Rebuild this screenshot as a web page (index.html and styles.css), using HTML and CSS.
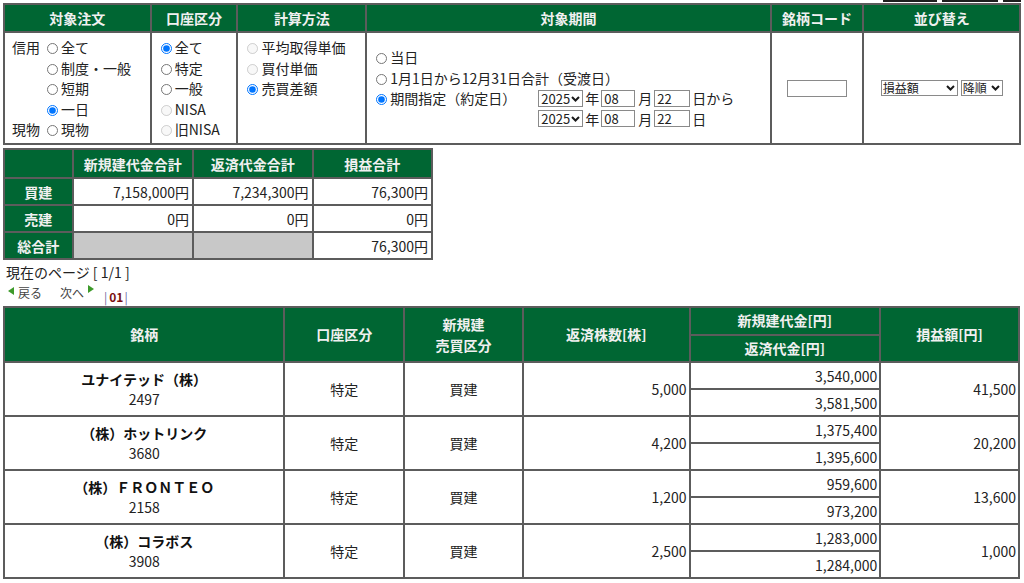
FILE: index.html
```html
<!DOCTYPE html>
<html lang="ja">
<head>
<meta charset="utf-8">
<title>損益</title>
<link rel="stylesheet" href="styles.css">
</head>
<body>
<div class="topbar"><span class="tb tb1"></span><span class="tb tb2"></span><span class="tb tb3"></span></div>

<table class="filter">
  <colgroup>
    <col class="fc1"><col class="fc2"><col class="fc3"><col class="fc4"><col class="fc5"><col class="fc6">
  </colgroup>
  <tr>
    <th>対象注文</th><th>口座区分</th><th>計算方法</th><th>対象期間</th><th>銘柄コード</th><th>並び替え</th>
  </tr>
  <tr>
    <td class="f-top f-order">
      <div class="order-grid">
        <span class="lbl">信用</span><label><input type="radio" name="ord">全て</label>
        <span></span><label><input type="radio" name="ord">制度・一般</label>
        <span></span><label><input type="radio" name="ord">短期</label>
        <span></span><label><input type="radio" name="ord" checked>一日</label>
        <span class="lbl">現物</span><label><input type="radio" name="ord">現物</label>
      </div>
    </td>
    <td class="f-top f-acc">
      <div class="stack">
        <label><input type="radio" name="acc" checked>全て</label>
        <label><input type="radio" name="acc">特定</label>
        <label><input type="radio" name="acc">一般</label>
        <label><input type="radio" name="acc" disabled>NISA</label>
        <label><input type="radio" name="acc" disabled>旧NISA</label>
      </div>
    </td>
    <td class="f-top f-calc">
      <div class="stack">
        <label><input type="radio" name="calc" disabled>平均取得単価</label>
        <label><input type="radio" name="calc" disabled>買付単価</label>
        <label><input type="radio" name="calc" checked>売買差額</label>
      </div>
    </td>
    <td class="f-period">
      <div class="period-grid">
        <label class="span2"><input type="radio" name="per">当日</label>
        <label class="span2"><input type="radio" name="per">1月1日から12月31日合計（受渡日）</label>
        <label><input type="radio" name="per" checked>期間指定（約定日）</label>
        <div class="date-row">
          <span class="sel sel-yr"><select><option>2025</option></select><svg class="chev" width="9" height="6" viewBox="0 0 9 6"><path d="M1 1l3.5 3.5L8 1" fill="none" stroke="#1a1a1a" stroke-width="2"/></svg></span><span>年</span><input class="md md1" type="text" value="08"><span>月</span><input class="md md2" type="text" value="22"><span>日から</span>
        </div>
        <span></span>
        <div class="date-row">
          <span class="sel sel-yr"><select><option>2025</option></select><svg class="chev" width="9" height="6" viewBox="0 0 9 6"><path d="M1 1l3.5 3.5L8 1" fill="none" stroke="#1a1a1a" stroke-width="2"/></svg></span><span>年</span><input class="md md1" type="text" value="08"><span>月</span><input class="md md2" type="text" value="22"><span>日</span>
        </div>
      </div>
    </td>
    <td class="f-center"><input class="code" type="text"></td>
    <td class="f-center">
      <div class="sort-row">
        <span class="sel sel-key"><select><option>損益額</option></select><svg class="chev" width="9" height="6" viewBox="0 0 9 6"><path d="M1 1l3.5 3.5L8 1" fill="none" stroke="#1a1a1a" stroke-width="2"/></svg></span>
        <span class="sel sel-dir"><select><option>降順</option></select><svg class="chev" width="9" height="6" viewBox="0 0 9 6"><path d="M1 1l3.5 3.5L8 1" fill="none" stroke="#1a1a1a" stroke-width="2"/></svg></span>
      </div>
    </td>
  </tr>
</table>

<table class="summary">
  <colgroup><col class="sc1"><col class="sc2"><col class="sc3"><col class="sc4"></colgroup>
  <tr class="shead"><th></th><th>新規建代金合計</th><th>返済代金合計</th><th>損益合計</th></tr>
  <tr><th>買建</th><td>7,158,000円</td><td>7,234,300円</td><td>76,300円</td></tr>
  <tr><th>売建</th><td>0円</td><td>0円</td><td>0円</td></tr>
  <tr><th>総合計</th><td class="gray"></td><td class="gray"></td><td>76,300円</td></tr>
</table>

<div class="pager">
  <div class="pageinfo">現在のページ [ 1/1 ]</div>
  <div class="nav">
    <span class="prev"><span class="tri-l"></span>戻る</span>
    <span class="next">次へ<span class="tri-r"></span></span>
    <span class="pages"><span class="bar">|</span><b>01</b><span class="bar">|</span></span>
  </div>
</div>

<table class="list">
  <colgroup><col class="lc1"><col class="lc2"><col class="lc3"><col class="lc4"><col class="lc5"><col class="lc6"></colgroup>
  <tr class="hrow">
    <th rowspan="2">銘柄</th>
    <th rowspan="2">口座区分</th>
    <th rowspan="2">新規建<br>売買区分</th>
    <th rowspan="2">返済株数[株]</th>
    <th class="hsub">新規建代金[円]</th>
    <th rowspan="2">損益額[円]</th>
  </tr>
  <tr class="hrow"><th class="hsub">返済代金[円]</th></tr>

  <tr>
    <td rowspan="2" class="name"><b>ユナイテッド（株）</b><br>2497</td>
    <td rowspan="2" class="c">特定</td>
    <td rowspan="2" class="c">買建</td>
    <td rowspan="2" class="r">5,000</td>
    <td class="r sub">3,540,000</td>
    <td rowspan="2" class="r">41,500</td>
  </tr>
  <tr><td class="r sub">3,581,500</td></tr>

  <tr>
    <td rowspan="2" class="name"><b>（株）ホットリンク</b><br>3680</td>
    <td rowspan="2" class="c">特定</td>
    <td rowspan="2" class="c">買建</td>
    <td rowspan="2" class="r">4,200</td>
    <td class="r sub">1,375,400</td>
    <td rowspan="2" class="r">20,200</td>
  </tr>
  <tr><td class="r sub">1,395,600</td></tr>

  <tr>
    <td rowspan="2" class="name"><b>（株）ＦＲＯＮＴＥＯ</b><br>2158</td>
    <td rowspan="2" class="c">特定</td>
    <td rowspan="2" class="c">買建</td>
    <td rowspan="2" class="r">1,200</td>
    <td class="r sub">959,600</td>
    <td rowspan="2" class="r">13,600</td>
  </tr>
  <tr><td class="r sub">973,200</td></tr>

  <tr>
    <td rowspan="2" class="name"><b>（株）コラボス</b><br>3908</td>
    <td rowspan="2" class="c">特定</td>
    <td rowspan="2" class="c">買建</td>
    <td rowspan="2" class="r">2,500</td>
    <td class="r sub">1,283,000</td>
    <td rowspan="2" class="r">1,000</td>
  </tr>
  <tr><td class="r sub">1,284,000</td></tr>
</table>
</body>
</html>
```

FILE: styles.css
```css
* { box-sizing: border-box; }

body {
  margin: 0;
  padding: 0 3px;
  font-family: "Noto Sans CJK JP", "Noto Sans", sans-serif;
  font-size: 14px;
  color: #222;
  background: #fff;
}

.topbar {
  display: flex;
  justify-content: flex-end;
  gap: 5px;
  height: 3px;
}
.tb { display: block; height: 2px; background: #1e1e1e; }
.tb1 { width: 54px; }
.tb2 { width: 56px; }
.tb3 { width: 18px; }

table { border-collapse: collapse; }
th, td { border: 2px solid #5c5c5c; padding: 0; }
th {
  background: #006633;
  color: #f0f0f0;
  font-weight: bold;
  text-align: center;
}

input[type="radio"] {
  width: 11px;
  height: 11px;
  margin: 0 3px 0 0;
  vertical-align: -1px;
}

label { white-space: nowrap; }

/* filter table */
.filter { width: 1018px; }
.fc1 { width: 147px; }
.fc2 { width: 87px; }
.fc3 { width: 129px; }
.fc4 { width: 405px; }
.fc5 { width: 93px; }
.fc6 { width: 157px; }
.filter th { height: 28px; }
.filter td { height: 112px; }
.f-top { vertical-align: top; padding: 4px 0 0 9px; }
.f-order { padding-left: 7px; }

.order-grid {
  display: grid;
  grid-template-columns: auto auto;
  justify-content: start;
  column-gap: 7px;
  line-height: 20.5px;
}
.stack { display: flex; flex-direction: column; line-height: 20.5px; }

.f-period { vertical-align: middle; padding: 0 0 0 9px; }
.period-grid {
  display: grid;
  grid-template-columns: 162px auto;
  line-height: 20.5px;
  align-items: center;
}
.span2 { grid-column: 1 / 3; }
.date-row { display: flex; align-items: center; height: 20.5px; }

.sel { position: relative; display: inline-flex; }
.sel select {
  appearance: none;
  -webkit-appearance: none;
  width: 100%;
  font-family: "Noto Sans CJK JP", "Noto Sans", sans-serif;
  font-size: 13px;
  line-height: 15px;
  color: #222;
  height: 17px;
  padding: 0 0 0 2px;
  border: 1px solid #8a8a8a;
  border-radius: 0;
  background: #fff;
}
.chev {
  position: absolute;
  right: 3px;
  top: 6px;
  pointer-events: none;
}
.sel-yr { width: 45px; margin-right: 2px; }

input[type="text"] {
  font-family: "Noto Sans CJK JP", "Noto Sans", sans-serif;
  font-size: 13px;
  color: #222;
  height: 17px;
  padding: 0 2px;
  border: 1px solid #8a8a8a;
  border-radius: 0;
  background: #fff;
}
.md1 { width: 34px; margin: 0 3px 0 2px; }
.md2 { width: 36px; margin: 0 2px 0 2px; }

.f-center { vertical-align: middle; text-align: center; }
.code { width: 60px; }
.sort-row { display: flex; justify-content: center; gap: 3px; }
.sel-key { width: 77px; }
.sel-dir { width: 42px; }
.sel-key select, .sel-dir select { height: 16px; font-size: 12px; line-height: 14px; padding-left: 1px; }
.sel-key .chev, .sel-dir .chev { top: 5px; right: 3px; }

/* summary */
.summary { width: 430px; margin-top: 3px; }
.sc1 { width: 69px; }
.sc2 { width: 121px; }
.sc3 { width: 120px; }
.sc4 { width: 120px; }
.summary th, .summary td { height: 27px; }
.summary .shead th { height: 29px; }
.summary td { text-align: right; padding-right: 3px; }
.summary td.gray { background: #c8c8c8; }

/* pager */
.pager { padding-left: 3px; }
.pageinfo { line-height: 20px; margin-top: 2px; }
.nav {
  display: flex;
  align-items: flex-start;
  height: 24px;
  padding-top: 2px;
  font-size: 12px;
  color: #444;
}
.prev { display: flex; align-items: flex-start; line-height: 18px; padding-left: 2px; }
.next { display: flex; align-items: flex-start; line-height: 18px; margin-left: 18px; }
.tri-l {
  width: 0; height: 0; margin: 3px 4px 0 0;
  border-top: 4px solid transparent;
  border-bottom: 4px solid transparent;
  border-right: 6px solid #3d9a2a;
}
.tri-r {
  width: 0; height: 0; margin: 1px 0 0 4px;
  border-top: 4px solid transparent;
  border-bottom: 4px solid transparent;
  border-left: 6px solid #3d9a2a;
}
.pages { margin-left: 10px; margin-top: 4px; line-height: 18px; font-size: 12px; }
.pages .bar { color: #6a6aa0; }
.pages b { color: #7a1010; margin: 0 1px 0 2px; }

/* list */
.list { width: 1017px; margin-top: 0; }
.lc1 { width: 281px; }
.lc2 { width: 120px; }
.lc3 { width: 119px; }
.lc4 { width: 167px; }
.lc5 { width: 191px; }
.lc6 { width: 139px; }
.hrow th { height: 27.5px; line-height: 21px; }
.list td { height: 27px; }
.list .c { text-align: center; }
.list .r { text-align: right; padding-right: 2px; }
.list .name { text-align: center; line-height: 20px; }
.list .name b { color: #111; }
```
